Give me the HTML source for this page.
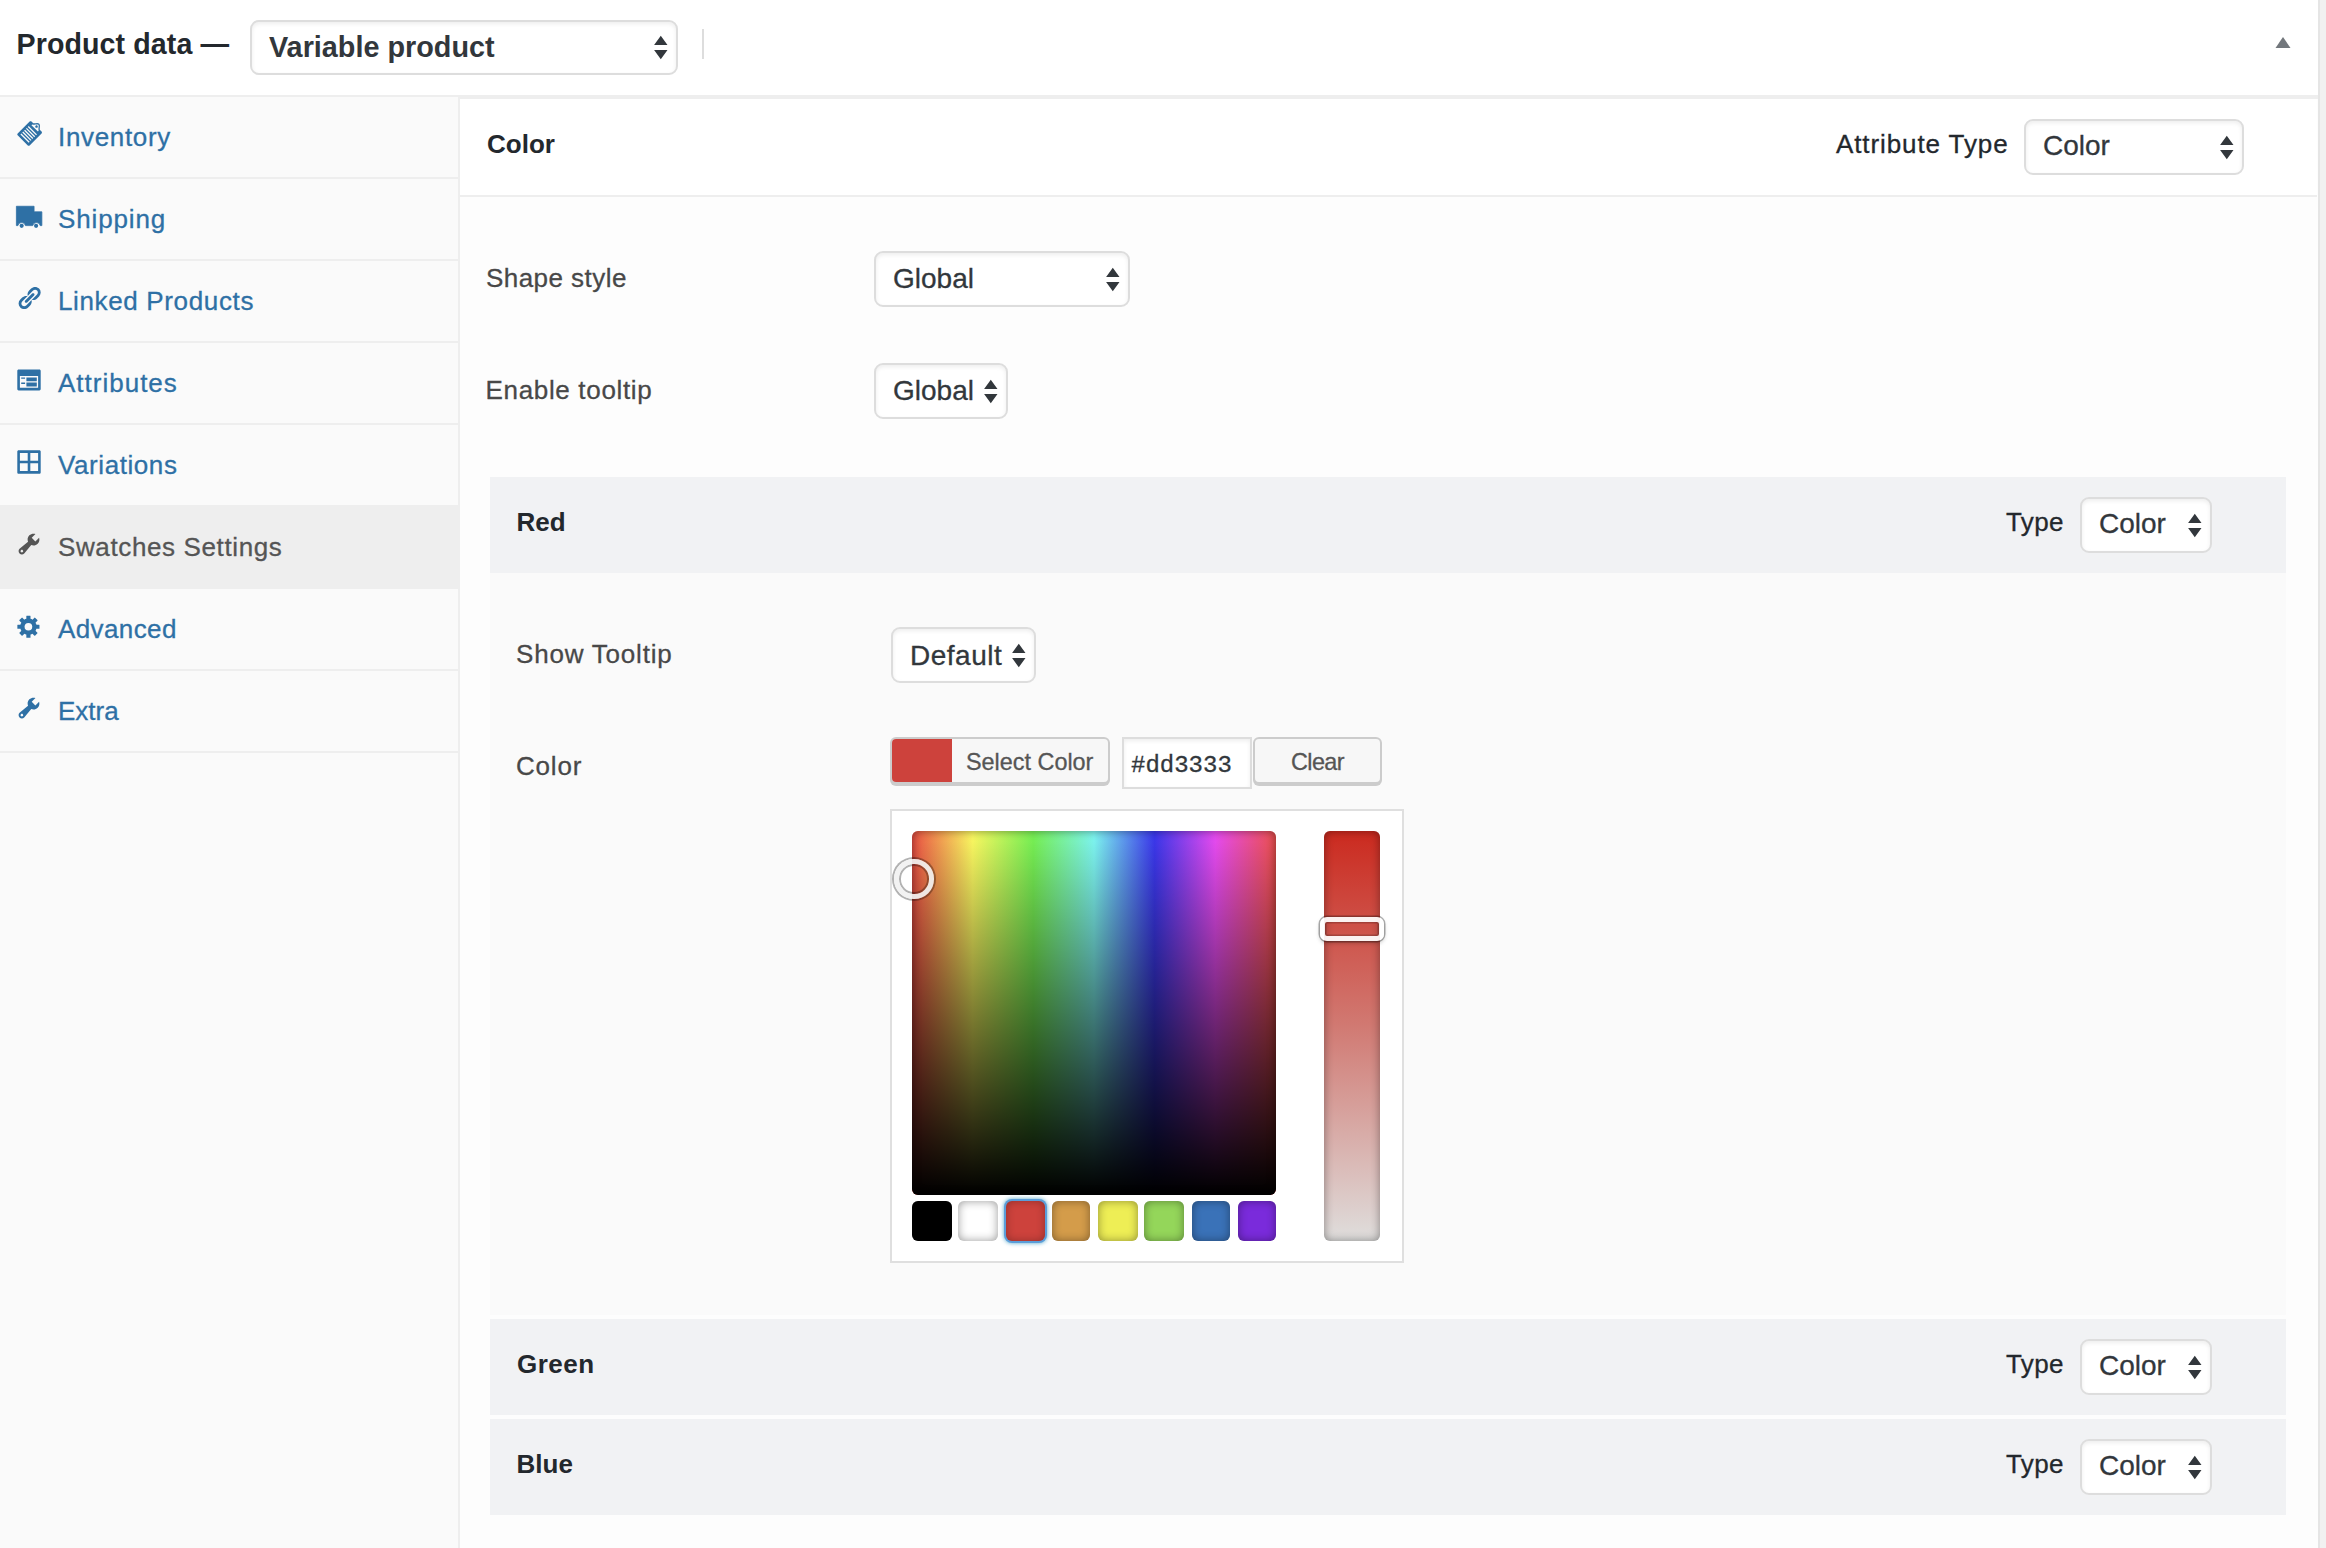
<!DOCTYPE html>
<html lang="en">
<head>
<meta charset="utf-8">
<title>Product data</title>
<style>
*{box-sizing:border-box;margin:0;padding:0}
html,body{width:2326px;height:1548px;overflow:hidden;background:#fff}
body{-webkit-text-stroke:.3px currentColor;font-family:"Liberation Sans",sans-serif;color:#444;position:relative;font-size:26px}
.abs{position:absolute}
#hdr{left:0;top:0;width:2318px;height:95px;background:#fff}
#hdrline{left:0;top:95px;width:2318px;height:2px;background:#eee}
#rightbar{left:2318px;top:0;width:8px;height:1548px;background:#f1f1f1;border-left:2px solid #e5e5e5}
#title{left:16.5px;top:26px;font-size:28.6px;font-weight:bold;-webkit-text-stroke:0;letter-spacing:.1px;color:#23282d;line-height:36px;white-space:nowrap}
.sel{position:absolute;background:#fff;border:2px solid #ddd;border-radius:9px;box-shadow:inset 0 2px 4px rgba(0,0,0,.07);color:#32373c;font-size:28px;white-space:nowrap}
.sel span{position:absolute;left:17px;top:50%;transform:translateY(-50%);line-height:1}
.sel svg{position:absolute;right:8px;top:50%;margin-top:-12.5px;width:13.6px;height:25px}
#side{left:0;top:97px;width:458px;height:1451px;background:#fafafa}
#sideborder{left:458px;top:97px;width:2px;height:1451px;background:#eee}
.item{position:absolute;left:0;width:458px;height:82px;border-bottom:2px solid #eee;color:#2e70a5;font-size:26px;line-height:81px;padding-left:58px;white-space:nowrap}
.item.active{background:#eee;color:#555}
.item svg{position:absolute;left:15.9px;top:23.9px;width:26px;height:26px;overflow:visible}
#main{left:460px;top:97px;width:1858px;height:1451px;background:#fdfdfd;border-top:2px solid #eee}
#chead{left:460px;top:99px;width:1857px;height:98px;background:#fff;border-bottom:2px solid #eee}
.bold{-webkit-text-stroke:0;font-weight:bold;color:#23282d;font-size:26px;white-space:nowrap;line-height:30px}
.lbl{color:#484848;font-size:26px;white-space:nowrap;line-height:30px}
.dark{color:#23282d}
.rowhead{position:absolute;left:490px;width:1796px;background:#f1f2f4}
#redbody{left:490px;top:572.5px;width:1796px;height:742.2px;background:#fafafa}

.btn{position:absolute;background:#f7f7f7;border:2px solid #ccc;border-radius:6px;box-shadow:0 2px 0 #ccc;color:#555;font-size:23.4px;white-space:nowrap}
#picker{left:890px;top:809px;width:514px;height:454px;background:#fff;border:2px solid #dfdfdf}
#sq{left:912px;top:831px;width:364px;height:364px;border-radius:6px;overflow:hidden;box-shadow:inset 0 0 10px rgba(0,0,0,.4)}
#strip{left:1324px;top:831px;width:56px;height:410px;border-radius:6px;box-shadow:inset 0 0 10px rgba(0,0,0,.4);background:linear-gradient(to bottom,#cb2a1f 0%,#d17a73 48%,#dfdedd 100%)}
.pal{position:absolute;top:1201px;height:40px;border-radius:6px;box-shadow:inset 0 0 10px rgba(0,0,0,.4)}
</style>
</head>
<body>
<div class="abs" id="hdr"></div>
<div class="abs" id="hdrline"></div>
<div class="abs" id="title">Product data —</div>
<div class="sel" style="left:250px;top:19.5px;width:428px;height:55px;font-weight:bold;font-size:28.8px;-webkit-text-stroke:0"><span>Variable product</span><svg viewBox="0 0 14 25"><path d="M7 0.3L13.9 10H0.1zM7 24.7L13.9 15H0.1z" fill="#32373c"/></svg></div>
<div class="abs" style="left:702px;top:29px;width:2px;height:30px;background:#ddd"></div>
<svg class="abs" style="left:2274px;top:36px;width:18px;height:13px" viewBox="0 0 18 13"><path d="M9 1 L16.5 12 L1.5 12 Z" fill="#72777c"/></svg>
<div class="abs" id="rightbar"></div>

<div class="abs" id="side"></div>
<div class="abs" id="sideborder"></div>
<div class="abs" id="main"></div>
<div class="abs" id="chead"></div>

<div class="item" style="top:97px"><svg viewBox="0 0 20 20" fill="currentColor"><path d="M11.9.39l1.4 1.4c1.61.19 3.5-.74 4.61.37s.18 3 .37 4.61l1.4 1.4c.39.39.39 1.02 0 1.41l-9.19 9.2c-.4.39-1.03.39-1.42 0L1.29 11c-.39-.39-.39-1.02 0-1.42l9.2-9.19c.39-.39 1.02-.39 1.41 0zm.58 2.25l-.58.58 4.95 4.95.58-.58c-.19-.6-.2-1.22-.15-1.82.02-.31.05-.62.09-.92.12-1 .18-1.63-.17-1.98s-.98-.29-1.98-.17c-.3.04-.61.07-.92.09-.6.05-1.22.04-1.82-.15zm4.02.93c.39.39.39 1.03 0 1.42s-1.03.39-1.42 0-.39-1.03 0-1.42 1.03-.39 1.42 0zm-6.72.36l-.71.7L15.44 11l.7-.71zM8.36 5.34l-.7.71 6.36 6.36.71-.71zM6.95 6.76l-.71.7 6.37 6.37.7-.71zM5.54 8.17l-.71.71 6.36 6.36.71-.71zM4.12 9.58l-.71.71 6.37 6.37.71-.71z"/></svg><span style="letter-spacing:0.66px">Inventory</span></div>
<div class="item" style="top:179px"><svg viewBox="0 0 20 20" fill="currentColor"><g transform="translate(0 -1.6)"><path d="M.3 4.1h13.6v4.3h6v10.6h-1.3a2.9 2.9 0 0 0-5.7 0H7.2a2.9 2.9 0 0 0-5.7 0H.3z" stroke="currentColor" stroke-width=".6" stroke-linejoin="round"/><circle cx="4.35" cy="19.15" r="1.6"/><circle cx="15.45" cy="19.15" r="1.6"/></g></svg><span style="letter-spacing:0.86px">Shipping</span></div>
<div class="item" style="top:261px"><svg viewBox="0 0 20 20" fill="currentColor"><path d="M17.74 2.76c1.68 1.69 1.68 4.41 0 6.1l-1.53 1.52c-1.12 1.12-2.7 1.47-4.14 1.09l2.62-2.61.76-.77.76-.76c.84-.84.84-2.2 0-3.04-.84-.85-2.2-.85-3.04 0l-.77.76-3.38 3.38c-.37-1.44-.02-3.02 1.1-4.14l1.52-1.53c1.69-1.68 4.42-1.68 6.1 0zM8.59 13.43l5.34-5.34c.42-.42.42-1.1 0-1.52-.44-.43-1.13-.39-1.53 0l-5.33 5.34c-.42.42-.42 1.1 0 1.52.44.43 1.13.39 1.52 0zm-.76 2.29l4.14-4.15c.38 1.44.03 3.02-1.09 4.14l-1.52 1.53c-1.69 1.68-4.41 1.68-6.1 0-1.68-1.68-1.68-4.42 0-6.1l1.53-1.52c1.12-1.12 2.7-1.47 4.14-1.1l-4.14 4.15c-.85.84-.85 2.2 0 3.05.84.84 2.2.84 3.04 0z"/></svg><span style="letter-spacing:0.64px">Linked Products</span></div>
<div class="item" style="top:343px"><svg viewBox="0 0 20 20" fill="currentColor"><path d="M2 2h16c.55 0 1 .45 1 1v14c0 .55-.45 1-1 1H2c-.55 0-1-.45-1-1V3c0-.55.45-1 1-1zm15 14V7H3v9h14zM4 8v1h3V8H4zm4 0v3h8V8H8zm-4 4v1h3v-1H4zm4 0v3h8v-3H8z"/></svg><span style="letter-spacing:1.0px">Attributes</span></div>
<div class="item" style="top:425px"><svg viewBox="0 0 20 20" fill="currentColor"><path d="M2 1h16c.55 0 1 .45 1 1v16c0 .55-.45 1-1 1H2c-.55 0-1-.45-1-1V2c0-.55.45-1 1-1zm7.01 7.99v-6H3v6h6.01zm8 0v-6h-6v6h6zm-8 8.01v-6H3v6h6.01zm8 0v-6h-6v6h6z"/></svg><span style="letter-spacing:0.58px">Variations</span></div>
<div class="item active" style="top:505px;height:84px;padding-top:2px"><svg viewBox="0 0 20 20" fill="currentColor" style="top:25.9px"><path d="M16.68 9.77c-1.34 1.34-3.3 1.67-4.95.99l-5.41 6.52c-.99.99-2.59.99-3.58 0s-.99-2.59 0-3.57l6.52-5.42c-.68-1.65-.35-3.61.99-4.95 1.28-1.28 3.12-1.62 4.72-1.06l-2.89 2.89 2.82 2.82 2.86-2.87c.53 1.58.18 3.39-1.08 4.65zM3.81 16.21c.4.39 1.04.39 1.43 0 .4-.4.4-1.04 0-1.43-.39-.4-1.03-.4-1.43 0-.39.39-.39 1.03 0 1.43z"/></svg><span style="letter-spacing:0.62px">Swatches Settings</span></div>
<div class="item" style="top:589px"><svg viewBox="0 0 20 20" fill="currentColor"><g><rect x="7.95" y="2.05" width="3.2" height="17" rx="0.3" transform="rotate(0 9.55 10.55)"/><rect x="7.95" y="2.05" width="3.2" height="17" rx="0.3" transform="rotate(45 9.55 10.55)"/><rect x="7.95" y="2.05" width="3.2" height="17" rx="0.3" transform="rotate(90 9.55 10.55)"/><rect x="7.95" y="2.05" width="3.2" height="17" rx="0.3" transform="rotate(135 9.55 10.55)"/><circle cx="9.55" cy="10.55" r="6.3"/><circle cx="9.55" cy="10.55" r="2.95" fill="#fafafa"/></g></svg><span style="letter-spacing:0.4px">Advanced</span></div>
<div class="item" style="top:671px"><svg viewBox="0 0 20 20" fill="currentColor"><path d="M16.68 9.77c-1.34 1.34-3.3 1.67-4.95.99l-5.41 6.52c-.99.99-2.59.99-3.58 0s-.99-2.59 0-3.57l6.52-5.42c-.68-1.65-.35-3.61.99-4.95 1.28-1.28 3.12-1.62 4.72-1.06l-2.89 2.89 2.82 2.82 2.86-2.87c.53 1.58.18 3.39-1.08 4.65zM3.81 16.21c.4.39 1.04.39 1.43 0 .4-.4.4-1.04 0-1.43-.39-.4-1.03-.4-1.43 0-.39.39-.39 1.03 0 1.43z"/></svg><span style="letter-spacing:0.0px">Extra</span></div>

<div class="abs bold" style="left:487px;top:129px">Color</div>
<div class="abs lbl dark" style="left:1836px;top:129px;letter-spacing:.9px">Attribute Type</div>
<div class="sel" style="left:2024px;top:119px;width:220px;height:56px"><span style="margin-top:-1.5px">Color</span><svg viewBox="0 0 14 25"><path d="M7 0.3L13.9 10H0.1zM7 24.7L13.9 15H0.1z" fill="#32373c"/></svg></div>

<div class="abs lbl" style="left:486px;top:263px;letter-spacing:.45px">Shape style</div>
<div class="sel" style="left:874px;top:251px;width:256px;height:56px"><span>Global</span><svg viewBox="0 0 14 25"><path d="M7 0.3L13.9 10H0.1zM7 24.7L13.9 15H0.1z" fill="#32373c"/></svg></div>
<div class="abs lbl" style="left:485.5px;top:375px;letter-spacing:.67px">Enable tooltip</div>
<div class="sel" style="left:874px;top:363px;width:134px;height:56px"><span>Global</span><svg viewBox="0 0 14 25"><path d="M7 0.3L13.9 10H0.1zM7 24.7L13.9 15H0.1z" fill="#32373c"/></svg></div>

<div class="rowhead" style="top:477px;height:96px"></div>
<div class="abs" id="redbody"></div>
<div class="rowhead" style="top:1318.7px;height:96.2px"></div>
<div class="rowhead" style="top:1419.4px;height:95.3px"></div>

<div class="abs bold" style="left:516.5px;top:507px">Red</div>
<div class="abs lbl dark" style="left:2006px;top:507px;letter-spacing:.4px">Type</div>
<div class="sel" style="left:2080px;top:497px;width:132px;height:56px"><span style="margin-top:-1.5px">Color</span><svg viewBox="0 0 14 25"><path d="M7 0.3L13.9 10H0.1zM7 24.7L13.9 15H0.1z" fill="#32373c"/></svg></div>

<div class="abs lbl" style="left:516px;top:639px;letter-spacing:.8px">Show Tooltip</div>
<div class="sel" style="left:891px;top:627px;width:145px;height:56px"><span style="letter-spacing:.5px;margin-top:1px">Default</span><svg viewBox="0 0 14 25"><path d="M7 0.3L13.9 10H0.1zM7 24.7L13.9 15H0.1z" fill="#32373c"/></svg></div>

<div class="abs lbl" style="left:516px;top:750.5px;letter-spacing:.8px">Color</div>
<div class="btn" style="left:890px;top:737px;width:220px;height:47px"><div class="abs" style="left:0;top:0;width:60px;height:43px;background:#cd423c;border-radius:4px 0 0 4px"></div><span class="abs" style="left:74px;top:9px;line-height:28px">Select Color</span></div>
<div class="abs" style="left:1122px;top:737px;width:130px;height:52px;background:#fff;border:2px solid #ddd;box-shadow:inset 0 2px 4px rgba(0,0,0,.07)"><span class="abs" style="left:7px;top:13px;font-family:'Liberation Mono',monospace;font-size:24px;line-height:28px;color:#32373c">#dd3333</span></div>
<div class="btn" style="left:1253px;top:737px;width:129px;height:47px"><span class="abs" style="left:0;width:125px;text-align:center;top:9px;line-height:28px;letter-spacing:-.6px">Clear</span></div>

<div class="abs" id="picker"></div>
<div class="abs" id="sq">
<div class="abs" style="left:0;top:0;width:100%;height:100%;background:linear-gradient(to right,#ef5145 0%,#fdfb62 16.67%,#78f355 33.33%,#7ff8f3 50%,#3c38ee 66.67%,#e94cf3 83.33%,#f0524f 100%)"></div>
<div class="abs" style="left:0;top:0;width:100%;height:100%;background:linear-gradient(to bottom,rgba(0,0,0,0),#000)"></div>
<div class="abs" style="left:0;top:0;width:100%;height:100%;border-radius:6px;box-shadow:inset 0 0 10px rgba(0,0,0,.45)"></div>
</div>
<div class="abs" id="strip"></div>
<div class="abs" style="left:894.4px;top:859.2px;width:39.4px;height:39.4px;border-radius:50%;border:5.7px solid rgba(241,241,241,.92);box-shadow:0 0 0 2px rgba(0,0,0,.3),inset 0 0 0 2px rgba(0,0,0,.3)"></div>
<div class="abs" style="left:1319.8px;top:917.4px;width:64.2px;height:23.2px;border-radius:7px;border:5px solid rgba(255,255,255,.92);box-shadow:0 0 0 1.5px rgba(0,0,0,.3),0 2px 4px rgba(0,0,0,.25),inset 0 0 0 1.5px rgba(0,0,0,.2)"></div>

<div class="pal" style="left:912px;width:40px;background:#000"></div>
<div class="pal" style="left:958px;width:40px;background:#fff"></div>
<div class="pal" style="left:1006px;width:38.5px;background:#cd423c;box-shadow:inset 0 0 8px rgba(0,0,0,.3),0 0 0 2px #5b9dd9,0 0 4px 2px rgba(30,140,190,.8)"></div>
<div class="pal" style="left:1052px;width:38px;background:#d49c4a"></div>
<div class="pal" style="left:1098px;width:40px;background:#eeee55"></div>
<div class="pal" style="left:1144px;width:40px;background:#94d65a"></div>
<div class="pal" style="left:1192px;width:38px;background:#3a72b8"></div>
<div class="pal" style="left:1238px;width:38px;background:#7a2bdb"></div>

<div class="abs bold" style="left:517px;top:1349px;letter-spacing:.5px">Green</div>
<div class="abs lbl dark" style="left:2006px;top:1349px;letter-spacing:.4px">Type</div>
<div class="sel" style="left:2080px;top:1339px;width:132px;height:56px"><span style="margin-top:-1.5px">Color</span><svg viewBox="0 0 14 25"><path d="M7 0.3L13.9 10H0.1zM7 24.7L13.9 15H0.1z" fill="#32373c"/></svg></div>

<div class="abs bold" style="left:516.5px;top:1449px">Blue</div>
<div class="abs lbl dark" style="left:2006px;top:1449px;letter-spacing:.4px">Type</div>
<div class="sel" style="left:2080px;top:1439px;width:132px;height:56px"><span style="margin-top:-1.5px">Color</span><svg viewBox="0 0 14 25"><path d="M7 0.3L13.9 10H0.1zM7 24.7L13.9 15H0.1z" fill="#32373c"/></svg></div>

</body>
</html>
